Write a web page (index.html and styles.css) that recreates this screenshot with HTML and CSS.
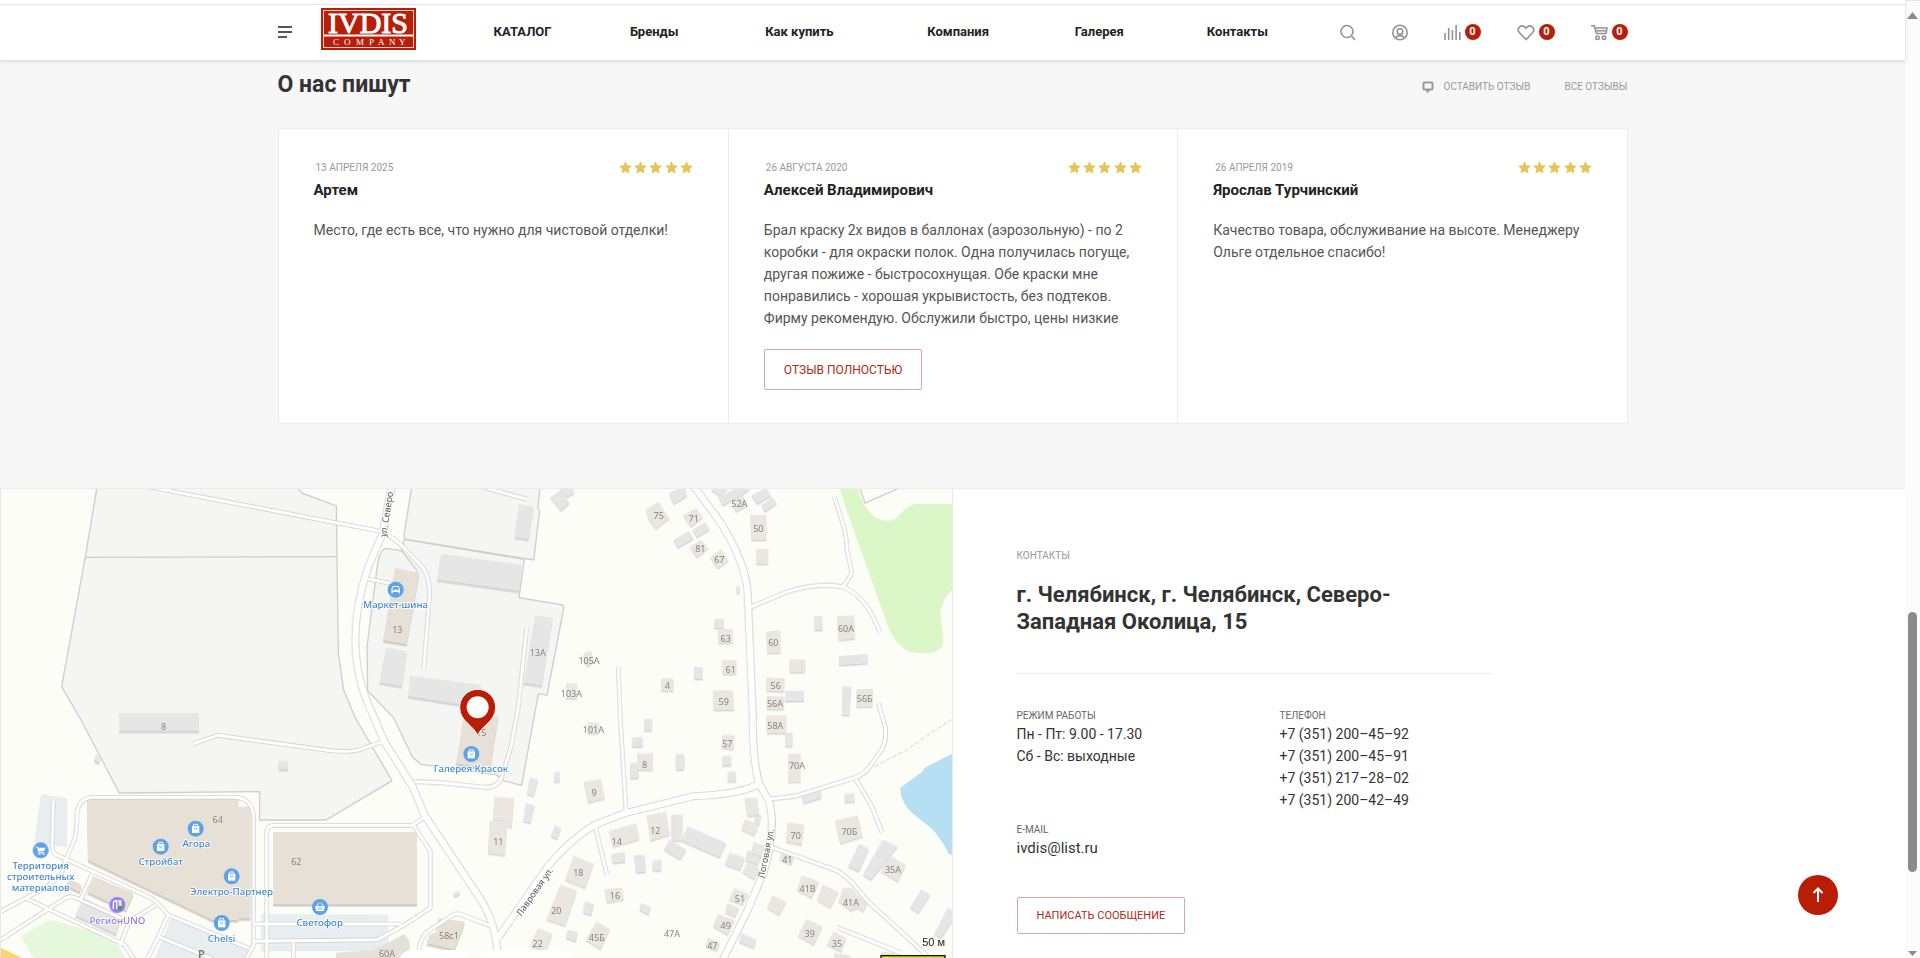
FILE: index.html
```html
<!DOCTYPE html>
<html lang="ru">
<head>
<meta charset="utf-8">
<title>IVDIS Company</title>
<link rel="stylesheet" href="styles.css">
</head>
<body>
<svg class="defs" width="0" height="0" aria-hidden="true">
  <defs>
    <path id="star" d="M6.500 0 8.400 4.300 13 4.800 9.600 7.900 10.600 12.600 6.500 10.200 2.400 12.600 3.400 7.900 0 4.800 4.600 4.300Z"/>
    <g id="stars"><use href="#star"/><use href="#star" x="15"/><use href="#star" x="30"/><use href="#star" x="46"/><use href="#star" x="61"/></g>
    <g id="bag"><circle r="24" fill="#5ea3ea"/><path d="M-11-8H11V13H-11Z" fill="#fff"/><path d="M-6-8V-13H6V-8" fill="none" stroke="#fff" stroke-width="3"/><path d="M-5-2Q0 7 5-2" fill="none" stroke="#5ea3ea" stroke-width="3"/></g>
  </defs>
</svg>
<div class="window">
<div class="page">
  <header class="header">
    <div class="container header-row">
      <button class="burger" aria-label="Меню"><span></span><span></span><span></span></button>
      <a class="logo" href="#" aria-label="IVDIS Company">
        <svg width="95" height="42" viewBox="0 0 95 42">
          <rect width="95" height="42" fill="#b81f08"/>
          <rect x="2.500" y="2.500" width="90" height="37" fill="none" stroke="#f3cfc7"/>
          <path d="M3 27.500H92" stroke="#fff" stroke-width="2"/>
          <text class="logo-name" x="47" y="25" text-anchor="middle">IVDIS</text>
          <text class="logo-sub" x="12 23 35 48 57 68 78" y="37">COMPANY</text>
        </svg>
      </a>
      <nav class="nav">
        <a href="#">КАТАЛОГ</a><a href="#">Бренды</a><a href="#">Как купить</a><a href="#">Компания</a><a href="#">Галерея</a><a href="#">Контакты</a>
      </nav>
      <div class="tools">
        <a href="#" aria-label="Поиск"><svg width="16" height="17" viewBox="0 0 16 17"><circle cx="7" cy="7.500" r="6"/><path d="m11.500 12 3.500 4"/></svg></a>
        <a href="#" aria-label="Кабинет"><svg width="16" height="17" viewBox="0 0 16 17"><circle cx="8" cy="8.500" r="7.200"/><circle cx="8" cy="7.500" r="2.800"/><path d="M3.500 13.500Q8 9.800 12.500 13.500"/></svg></a>
        <a href="#" aria-label="Сравнение"><svg width="17" height="17" viewBox="0 0 17 17"><path d="M1 16V9M4.700 16V4M8.400 16V6M12.100 16V1M15.800 16V8"/></svg><span class="badge">0</span></a>
        <a href="#" aria-label="Избранное"><svg width="18" height="17" viewBox="0 0 18 17"><path d="M9 15.500 2.300 8.500C-1 4.500 4 0 7.700 2.800L9 4.200 10.300 2.800C14 0 19 4.500 15.700 8.500Z"/></svg><span class="badge">0</span></a>
        <a href="#" aria-label="Корзина"><svg width="17" height="17" viewBox="0 0 17 17"><path d="M0 1.800H3.200L5.500 9.500H15L16 4H4M5 6.700H15.500"/><circle cx="6.500" cy="13.700" r="1.700"/><circle cx="13" cy="13.700" r="1.700"/></svg><span class="badge">0</span></a>
      </div>
    </div>
  </header>

  <section class="reviews">
    <div class="container">
      <div class="reviews-head">
        <h2>О нас пишут</h2>
        <div class="reviews-links">
          <a href="#"><svg width="12" height="12" viewBox="0 0 12 12"><path d="M2.500 1.500H9.500Q10.500 1.500 10.500 2.500V7.500Q10.500 8.500 9.500 8.500H7.500L5.500 10.500V8.500H2.500Q1.500 8.500 1.500 7.500V2.500Q1.500 1.500 2.500 1.500Z"/></svg>ОСТАВИТЬ ОТЗЫВ</a>
          <a href="#">ВСЕ ОТЗЫВЫ</a>
        </div>
      </div>
      <div class="cards">
        <article class="card">
          <div class="card-top"><time>13 АПРЕЛЯ 2025</time><svg class="stars" width="74" height="13"><use href="#stars"/></svg></div>
          <h3>Артем</h3>
          <p>Место, где есть все, что нужно для чистовой отделки!</p>
        </article>
        <article class="card">
          <div class="card-top"><time>26 АВГУСТА 2020</time><svg class="stars" width="74" height="13"><use href="#stars"/></svg></div>
          <h3>Алексей Владимирович</h3>
          <p>Брал краску 2х видов в баллонах (аэрозольную) - по 2 коробки - для окраски полок. Одна получилась погуще, другая пожиже - быстросохнущая. Обе краски мне понравились - хорошая укрывистость, без подтеков. Фирму рекомендую. Обслужили быстро, цены низкие</p>
          <button class="btn btn-review">ОТЗЫВ ПОЛНОСТЬЮ</button>
        </article>
        <article class="card">
          <div class="card-top"><time>26 АПРЕЛЯ 2019</time><svg class="stars" width="74" height="13"><use href="#stars"/></svg></div>
          <h3>Ярослав Турчинский</h3>
          <p>Качество товара, обслуживание на высоте. Менеджеру Ольге отдельное спасибо!</p>
        </article>
      </div>
    </div>
  </section>

  <section class="place">
    <div class="map">
      <svg class="map-svg" viewBox="0 27 2856 1407" preserveAspectRatio="xMinYMin slice" role="img" aria-label="Карта">
        <defs>
          <g id="roads-minor">
            <path d="M430 18 1145 155Q1180 175 1205 200L1265 262Q1285 290 1286 340L1268 568M1100 297 1180 312"/>
            <g transform="translate(1080 0)"><path d="M360 20 498 58M497 443 472 680 450 800 422 890Q410 925 370 922L240 908 160 905M772 560 778 720 795 990M703 1040 738 1185M170 1434Q175 1380 195 1358L275 1305Q290 1298 305 1305L395 1340"/></g>
            <g transform="translate(0 714)"><path d="M575 78 650 52 990 98Q1060 105 1090 90L1148 70M195 425 222 360Q228 330 228 290 230 245 270 238H700Q755 240 758 300V680L735 725M797 725V345Q797 322 820 322H1235L1270 298M1238 322 1288 400V570L1215 618 1130 665 760 670M760 618H1200M877 670V725M157 250 153 395Q155 405 170 412L440 535Q465 545 500 590L745 692M195 425 180 470 140 505 0 580M275 465 240 542M75 540 145 575 370 680 400 725M-5 668 185 545Q205 530 225 540L360 600M465 560 385 610 355 685M500 595 470 660 440 720M470 655 640 725"/></g>
            <g transform="translate(1680 0)"><path d="M820 50 848 140Q858 180 858 210L872 275Q870 290 845 320M565 383 680 335Q780 305 850 322 920 355 957 458M952 670 965 714"/></g>
            <g transform="translate(1680 714)"><path d="M965 0Q985 50 962 95L925 148Q905 172 880 180L700 235 628 243M885 185 930 260 963 342M632 388 820 455Q860 470 920 550L1030 650 1100 715M828 628 1020 705"/></g>
          </g>
          <g id="roads-main">
            <path d="M1172 15 1145 160 1102 260Q1063 370 1063 480 1063 600 1120 714L1150 785 1235 920 1270 1005 1440 1260Q1490 1340 1490 1440"/>
            <path d="M1490 1375 1640 1160Q1700 1085 1780 1035L1870 1000 2080 948Q2210 945 2275 912"/>
            <path d="M2076 15 2160 130Q2235 250 2240 340L2255 700Q2255 850 2275 912L2305 965Q2325 1050 2290 1170L2240 1290 2165 1440"/>
          </g>
        </defs>
        <rect width="2856" height="1440" fill="#fcfdf7"/>

        <!-- parks, water, parking -->
        <path d="M2513 15 2540 100 2665 450Q2700 515 2740 518L2785 520Q2830 510 2827 480L2818 400Q2825 350 2860 325V72H2745Q2720 75 2690 110 2665 135 2620 110 2585 85 2568 15Z" fill="#dbf7c8"/>
        <path d="M2575 20 2592 69 2700 22" class="fence"/>
        <path d="M2860 818 2770 864 2765 874 2698 924Q2700 974 2740 1004L2790 1044Q2820 1074 2845 1124H2860Z" fill="#b6dff4"/>
        <g transform="translate(0 714)">
          <path d="M60 655 140 608Q180 608 200 620L300 645 350 680 375 725H100Z" fill="#e6f8dc"/>
          <path d="M0 690 75 725H0Z" fill="#ffd56b"/>
          <path d="M120 228 198 240V388L100 375ZM510 598 745 695 735 725H460ZM780 588 1162 590V700H780Z" fill="#e8eef0"/>
        </g>

        <!-- fenced areas -->
        <g class="zone">
          <path d="M289 15 253 231 182 620 240 720 355 939 776 935V1020H975L1173 902 1063 714 1028 630 1012 520 1008 230 1006 78 905 40 880 15Z"/>
          <path d="M253 232 1007 230"/>
          <g transform="translate(1080 0)">
            <path d="M153 15 129 165Q130 178 145 180L518 240 536 92 530 85 538 15Z"/>
            <path d="M75 205 122 212 129 178 490 238 474 353 600 374Q610 376 608 385L558 645 532 641 482 916 430 903 405 884 180 853 155 832 97 712 20 632 18 500 50 250Q60 205 75 205Z"/>
            <path d="M122 212 170 275"/>
          </g>
        </g>
        <path class="trail" d="M2620 859 2710 814 2850 719"/>

        <!-- buildings -->
        <g class="big grey">
          <path d="M354 699H594V752H354Z"/>
          <path d="M1320 221 1568 256 1552 332 1308 298ZM1554 72 1598 80 1582 176 1540 170ZM1602 407 1655 413 1622 616 1568 608ZM1155 502 1217 514 1203 618 1135 607ZM1228 587 1440 615 1425 680 1221 648Z"/>
          <path d="M285 822 300 832 292 848 278 838ZM832 842H860V866H832Z"/>
          <path d="M248 1254 360 1310 345 1362 222 1305Z"/>
        </g>
        <g class="big beige">
          <path d="M1182 264 1255 278 1217 492 1146 480ZM1390 700 1492 708 1467 868 1365 850Z"/>
          <path d="M712 980H748V1315H712Z"/><path d="M258 954H712V1320H635L261 1140Z"/><path d="M816 1056H1248V1272H816Z"/>
          <path d="M280 1190 398 1240 375 1290 258 1235ZM205 1195 242 1215 235 1235 195 1215Z"/>
          <path d="M1312 1315 1392 1325 1360 1408 1276 1390 1285 1365 1305 1355ZM1005 1418 1120 1410 1210 1362 1225 1382V1440H1005Z"/>
        </g>
        <g class="small grey">
          <g transform="translate(1080 0)"><path d="M568 52 600 30 625 70 600 92ZM595 25 630 15 640 38 618 52ZM508 892 530 900 518 948 498 942ZM580 875H595V905H580ZM495 970 520 976 508 1030 487 1024ZM582 1034 600 1045 588 1078 570 1068ZM275 1240 293 1232 298 1242 282 1251ZM853 716H872V750H853ZM814 772H844V800H814ZM808 848H832V895H808ZM752 1122 790 1116 792 1145 755 1150ZM820 1126 850 1124 854 1175 826 1178ZM875 1142 900 1138V1172L876 1172ZM672 1264 698 1272 690 1305 666 1298ZM840 1268 868 1282 862 1304 836 1290ZM620 1350 650 1356 644 1384 616 1375Z"/></g>
          <g transform="translate(1680 0)"><path d="M324 38 370 20 378 48 338 72ZM473 50 545 15 565 30 485 77ZM572 45 615 25 630 48 588 72ZM602 75 635 52 648 70 612 95ZM338 180 385 152 398 176 350 203ZM395 150 432 126 446 148 408 172ZM527 318H536V338H527ZM461 416H488V445H461ZM400 562H425V597H400ZM761 408H784V450H761ZM834 528 920 522V550L835 556ZM672 632H728V663H672ZM845 619 871 620 865 706 843 704Z"/></g>
          <g transform="translate(1680 714)"><path d="M250 2H272V38H250ZM345 108H369V155H345ZM484 113H509V142H484ZM501 160H524V190H501ZM673 44H694V85H673ZM722 235 778 218 781 240 728 256ZM852 226H880V252H852ZM332 290H364V368H332ZM380 325 495 375 475 418 362 368ZM325 365 375 395 358 424 309 395ZM583 288 600 290 595 320 580 316ZM505 403 550 418 538 456 492 440ZM560 395 600 410 590 440 553 428ZM895 378 923 392 893 460 862 445ZM965 365 1010 385 930 485 906 470ZM1080 514 1107 530 1072 585 1048 568ZM1160 570 1180 580V600L1140 660 1120 648ZM540 645 585 665 578 690 535 672ZM820 705 868 712V730H820ZM960 700 1000 704V710H960Z"/></g>
        </g>
        <g class="small house">
          <g transform="translate(1080 0)"><path d="M400 951 459 954 452 1042 440 1040V1022L396 1020ZM386 1022 439 1026 432 1126 381 1120ZM668 905 720 897 731 956 682 967ZM744 1052 826 1030 835 1078 757 1100ZM860 1010 900 1000 926 1060 874 1080ZM638 1127 698 1152 672 1224 612 1200ZM598 1213 648 1232 612 1338 556 1318ZM730 1228 782 1222 788 1258 738 1268ZM530 1344 574 1362 555 1412 508 1398ZM706 1325 746 1346 720 1408 674 1380ZM828 820H875V870H828ZM668 520 690 512 698 545 680 558 668 545ZM615 610H648V655H615ZM680 725 714 730V760H680Z"/></g>
          <g transform="translate(1680 0)"><path d="M256 88 292 65 325 115 284 146 262 115ZM367 105 405 84 425 112 390 140ZM387 200 420 178 441 205 408 233ZM448 232 480 208 502 242 470 266ZM450 30 480 15 500 25 475 47ZM512 65 545 45 560 75 525 95ZM569 105H615V180H572ZM586 206H620V252H586ZM472 447H514V490H472ZM485 541H525V583H485ZM301 595H336V633H301ZM457 631H514L518 690H458ZM616 455 656 450 659 518 620 520ZM829 408 878 406 881 476 833 480ZM686 538H731V577H686ZM618 592 670 595 668 635 616 632ZM618 648 668 650V688H618ZM618 706H674V760H618ZM887 628 936 626 934 680 887 680Z"/></g>
          <g transform="translate(1680 714)"><path d="M484 50 520 52 518 94 481 88ZM681 107H718V192H681ZM551 240 588 240 595 290 560 295ZM552 303 593 320 580 352 541 335ZM680 313 730 320 722 380 675 372ZM822 308 890 292 905 355 838 376ZM258 292 315 282 326 350 268 368ZM577 372 610 382 600 415 572 405ZM558 435 595 450 580 484 544 462ZM660 405 698 420 690 440 656 425ZM722 472 774 490 752 540 708 515ZM785 500 832 522 808 570 768 545ZM845 512 870 508 918 556 908 580 888 570 870 578 833 550ZM634 532 676 552 655 590 618 570ZM520 510 562 528 545 560 505 545ZM500 556 535 570 522 596 492 584ZM470 588 520 606 500 650 456 626ZM442 658 476 676 466 698 432 684ZM735 604 784 624 758 680 711 654ZM818 640 856 660 840 700 798 680ZM985 412 1034 440 1010 490 960 460Z"/></g>
        </g>

        <!-- roads -->
        <use href="#roads-minor" class="road minor-case"/>
        <use href="#roads-main" class="road main-case"/>
        <use href="#roads-minor" class="road minor-fill"/>
        <use href="#roads-main" class="road main-fill"/>

        <!-- house numbers -->
        <g class="num">
          <text x="488" y="751">8</text><text x="1189" y="458">13</text><text x="650" y="1030">64</text><text x="886" y="1154">62</text><text x="1344" y="1376">58с1</text><text x="1158" y="1431">60А</text><text x="1441" y="768">15</text>
          <text x="1610" y="528">13А</text><text x="1764" y="552">105А</text><text x="1711" y="651">103А</text><text x="1777" y="758">101А</text><text x="1931" y="863">8</text><text x="1779" y="948">9</text><text x="1492" y="1094">11</text><text x="1847" y="1095">14</text><text x="1963" y="1063">12</text><text x="1732" y="1188">18</text><text x="1842" y="1256">16</text><text x="1666" y="1301">20</text><text x="1610" y="1402">22</text><text x="1788" y="1382">45Б</text>
          <text x="1973" y="118">75</text><text x="2078" y="125">71</text><text x="2098" y="216">81</text><text x="2155" y="249">67</text><text x="2215" y="82">52А</text><text x="2272" y="155">50</text><text x="2174" y="486">63</text><text x="2317" y="499">60</text><text x="2535" y="457">60А</text><text x="2189" y="579">61</text><text x="1999" y="628">4</text><text x="2324" y="627">56</text><text x="2168" y="676">59</text><text x="2322" y="682">56А</text><text x="2591" y="667">56Б</text>
          <text x="2323" y="746">58А</text><text x="2179" y="800">57</text><text x="2388" y="867">70А</text><text x="2384" y="1076">70</text><text x="2545" y="1065">70Б</text><text x="2359" y="1149">41</text><text x="2676" y="1179">35А</text><text x="2420" y="1236">41В</text><text x="2550" y="1277">41А</text><text x="2217" y="1267">51</text><text x="2174" y="1347">49</text><text x="2013" y="1371">47А</text><text x="2134" y="1408">47</text><text x="2426" y="1370">39</text><text x="2508" y="1400">35</text>
        </g>
        <text class="parking" x="601" y="1434">P</text>
        <g class="street">
          <text transform="translate(1155 172) rotate(-81)">ул. Северо</text>
          <text transform="translate(1560 1310) rotate(-55)">Лавровая ул.</text>
          <text transform="translate(2290 1196) rotate(-79)">Логовая ул.</text>
        </g>

        <!-- places -->
        <use href="#bag" x="1411" y="822"/><use href="#bag" x="584" y="1046"/><use href="#bag" x="479" y="1100"/><use href="#bag" x="692" y="1189"/><use href="#bag" x="662" y="1329"/>
        <g transform="translate(1184 329)"><circle r="24" fill="#5ea3ea"/><path d="M-9-11H9L13-1V11H8V7H-8V11H-13V-1Z" fill="#fff"/><path d="M-7-7H7L9-1H-9ZM-9 2H-5M5 2H9" fill="#5ea3ea" stroke="#5ea3ea" stroke-width="2"/></g>
        <g transform="translate(119 1111)"><circle r="24" fill="#5ea3ea"/><path d="M-15-10H-9L-6 7H10" fill="none" stroke="#fff" stroke-width="3"/><path d="M-8-8H14L10 3H-6Z" fill="#fff"/><circle cx="-4" cy="11" r="3" fill="#fff"/><circle cx="8" cy="11" r="3" fill="#fff"/></g>
        <g transform="translate(957 1281)"><circle r="24" fill="#5ea3ea"/><path d="M-15-3H15L11 12H-11Z" fill="#fff"/><path d="M-9-3-3-13M9-3 3-13" stroke="#fff" stroke-width="3"/><path d="M-5 1V9M0 1V9M5 1V9" stroke="#5ea3ea" stroke-width="2"/></g>
        <g transform="translate(349 1275)"><circle r="24" fill="#9a7ff0"/><path d="M-12 12V-5Q-12-13-2-13V12M2-12H10V12M4-6H10M4 0H10" fill="none" stroke="#fff" stroke-width="4"/><circle cx="9" cy="9" r="7" fill="#3aa845"/></g>
        <g class="poi">
          <text x="1184" y="384">Маркет-шина</text><text x="1410" y="877">Галерея Красок</text><text x="586" y="1102">Агора</text><text x="479" y="1155">Стройбат</text><text x="692" y="1245">Электро-Партнер</text><text x="662" y="1387">Chelsi</text><text x="956" y="1337">Светофор</text>
          <text x="119" y="1167">Территория</text><text x="119" y="1200">строительных</text><text x="119" y="1233">материалов</text>
          <text class="violet" x="349" y="1332">РегионUNO</text>
        </g>

        <!-- pin -->
        <path d="M1430 767C1418 735 1376 725 1376 682A54 54 0 0 1 1484 682C1484 725 1442 735 1430 767Z" fill="#ba1d05" stroke="#fff" stroke-width="3"/>
        <circle cx="1430" cy="682" r="33" fill="#fff"/>

        <!-- controls -->
        <rect x="1195" y="1410" width="210" height="90" rx="36" fill="#fff"/><rect x="1435" y="1410" width="280" height="90" rx="36" fill="#fff"/>
        <text class="scale" x="2832" y="1398">50 м</text>
        <rect x="2640" y="1427" width="192" height="30" fill="#e5e51a" stroke="#111" stroke-width="4"/>
      </svg>
    </div>
    <div class="contacts">
      <div class="contacts-body">
        <p class="label label-light">КОНТАКТЫ</p>
        <h2 class="address">г. Челябинск, г. Челябинск, Северо-Западная Околица, 15</h2>
        <div class="details">
          <div><p class="label">РЕЖИМ РАБОТЫ</p><p>Пн - Пт: 9.00 - 17.30</p><p>Сб - Вс: выходные</p></div>
          <div><p class="label">ТЕЛЕФОН</p><a href="#">+7 (351) 200–45–92</a><a href="#">+7 (351) 200–45–91</a><a href="#">+7 (351) 217–28–02</a><a href="#">+7 (351) 200–42–49</a></div>
          <div><p class="label">E-MAIL</p><a class="mail" href="#">ivdis@list.ru</a></div>
        </div>
        <button class="btn btn-message">НАПИСАТЬ СООБЩЕНИЕ</button>
      </div>
    </div>
  </section>
</div>
<div class="scrollbar" aria-hidden="true">
  <svg width="11" height="7" viewBox="0 0 11 7"><path d="M5.500 0 11 7H0Z" fill="#8b8b8b"/></svg>
  <div class="thumb"></div>
  <svg width="9" height="5" viewBox="0 0 9 5"><path d="M0 0H9L4.500 5Z" fill="#8b8b8b"/></svg>
</div>
<button class="to-top" aria-label="Наверх"><svg width="12" height="16" viewBox="0 0 12 16"><path d="M6 15V2M1.500 6 6 1.500 10.500 6"/></svg></button>
</div>
</body>
</html>
```
FILE: styles.css
```css
* { box-sizing: border-box; }
body { margin: 0; background: #fff; color: #333; font: 14px/22px Roboto, "Noto Sans", sans-serif; }
h2, h3, p { margin: 0; }
a { color: inherit; text-decoration: none; }
button { font: inherit; cursor: pointer; }
.defs { position: absolute; }
.window { display: flex; height: 100vh; overflow: hidden; }
.page { flex: 1; min-width: 0; display: flex; flex-direction: column; }
.container { width: 100%; max-width: 1350px; margin: 0 auto; }

.header { z-index: 1; padding-top: 4px; background: linear-gradient(#fff 4px, #e4e4e4 4px, #e4e4e4 5px, #fff 5px); box-shadow: 0 1px 4px rgba(0, 0, 0, .16); }
.header-row { display: flex; align-items: center; height: 56px; }
.burger { display: flex; flex-direction: column; gap: 3px; width: 14px; padding: 0; border: 0; background: none; }
.burger span { height: 2px; background: #555; }
.burger span:last-child { width: 9px; }
.logo { display: flex; margin: 0 41px 7px 29px; }
.logo-name { font: 30px "Liberation Serif", serif; fill: #fff; stroke: #fff; stroke-width: 1; }
.logo-sub { font: 9px "Liberation Serif", serif; fill: #fff; }
.nav { flex: 1; display: grid; grid-template-columns: 132fr 131fr 159fr 158fr 124fr 152fr; text-align: center; font-size: 13px; font-weight: 700; color: #222; }
.tools { display: flex; justify-content: space-between; width: 288px; margin-left: 26px; }
.tools a { display: flex; align-items: center; gap: 4px; }
.tools svg { fill: none; stroke: #939393; stroke-width: 1.6; }
.badge { width: 16px; height: 16px; border-radius: 8px; background: #b81f08; color: #fff; font-size: 11px; font-weight: 700; line-height: 16px; text-align: center; }

.reviews { padding: 12px 0 64px; background: #f7f7f7; }
.reviews-head { display: flex; justify-content: space-between; align-items: center; height: 24px; margin-bottom: 32px; }
h2 { font-size: 23px; line-height: 27px; font-weight: 700; color: #333; }
.reviews-links { display: flex; gap: 34px; padding-top: 5px; font-size: 10px; color: #999; }
.reviews-links a { display: flex; align-items: center; gap: 10px; }
.reviews-links svg { fill: none; stroke: #999; stroke-width: 2; }
.cards { display: grid; grid-template-columns: repeat(3, 1fr); border: 1px solid #ececec; background: #fff; min-height: 296px; }
.card { padding: 30px 35px 32px; }
.card + .card { border-left: 1px solid #ececec; }
.card-top { display: flex; justify-content: space-between; align-items: center; height: 16px; }
.card-top time { padding: 2px 0 0 2px; font-size: 10px; line-height: 16px; color: #999; }
.stars { fill: #e5c558; }
.card h3 { margin: 4px 0 18px; font-size: 15px; line-height: 22px; color: #222; }
.card p { margin-right: -4px; color: #555; }
.btn { display: block; border: 1px solid #dda59c; border-radius: 2px; background: #fff; color: #b02a18; }
.btn-review { height: 41px; margin-top: 20px; padding: 0 19px; font-size: 12px; }

.place { flex: 1; min-height: 0; display: grid; grid-template-columns: 1fr 1fr; border-top: 1px solid #ececec; }
.map { min-height: 0; border: solid #e8e8e8; border-width: 0 1px; overflow: hidden; }
.map-svg { display: block; width: 100%; height: 100%; }
.zone { fill: #f5f6f3; stroke: #cfcecb; stroke-width: 4; }
.fence { fill: #fcfdf7; stroke: #cfcecb; stroke-width: 4; }
.trail { fill: none; stroke: #d5d5d2; stroke-width: 3; stroke-dasharray: 14 6; }
.grey { fill: #e6e6e7; }
.house { fill: #ebe6e1; }
.beige { fill: #e7e0d6; }
.big { filter: drop-shadow(0 8px 0 #d2cdc6); }
.big.grey { filter: drop-shadow(0 8px 0 #d6d6d6); }
.small { filter: drop-shadow(0 4px 0 #d8d3ce); }
.small.grey { filter: drop-shadow(0 4px 0 #d0d0d2); }
.road { fill: none; stroke-linejoin: round; }
.minor-case { stroke: #d2d2d2; stroke-width: 14; }
.minor-fill { stroke: #fff; stroke-width: 9; }
.main-case { stroke: #d2d2d2; stroke-width: 23; }
.main-fill { stroke: #fff; stroke-width: 18; }
.num, .poi, .street, .parking { font-family: "Noto Sans", sans-serif; font-size: 27px; }
.num { fill: #858585; text-anchor: middle; }
.street { fill: #555; stroke: #fff; stroke-width: 4; paint-order: stroke; }
.parking { fill: #777; font-size: 33px; font-weight: 600; text-anchor: middle; }
.poi { font-size: 29px; fill: #438ad6; stroke: #fff; stroke-width: 5; paint-order: stroke; text-anchor: middle; font-weight: 500; }
.violet { fill: #8f78df; }
.scale { font: 33px "Liberation Sans", sans-serif; fill: #222; text-anchor: end; }

.contacts { padding: 56px 64px 0; }
.contacts-body { max-width: 475px; }
.label { font-size: 10px; line-height: 14px; color: #666; }
.label-light { padding-top: 4px; color: #999; }
.address { max-width: 400px; margin-top: 18px; padding-bottom: 38px; font-size: 22px; }
.details { display: grid; grid-template-columns: 263px 1fr; row-gap: 12px; padding-top: 35px; border-top: 1px solid #ececec; }
.details a { display: block; }
.details .mail { font-size: 15px; }
.btn-message { height: 37px; margin-top: 38px; padding: 0 19px; font-size: 11px; }

.scrollbar { display: flex; flex-direction: column; align-items: center; justify-content: space-between; width: 15px; padding: 11px 0 2px; background: #fcfcfc; border-top: 1px solid #e4e4e4; }
.thumb { width: 9px; height: 260px; margin-top: auto; margin-bottom: 79px; border-radius: 5px; background: #8b8b8b; }
.to-top { position: fixed; right: 82px; bottom: 43px; display: flex; align-items: center; justify-content: center; width: 40px; height: 40px; padding: 0; border: 0; border-radius: 50%; background: #ba1d05; }
.to-top svg { fill: none; stroke: #fff; stroke-width: 2; }
```
